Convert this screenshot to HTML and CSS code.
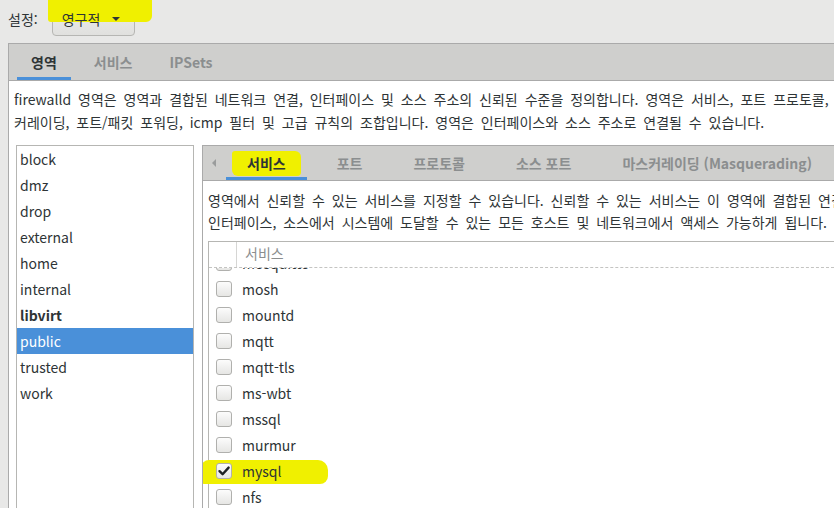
FILE: index.html
```html
<!DOCTYPE html>
<html lang="ko">
<head>
<meta charset="utf-8">
<title>firewalld</title>
<link rel="stylesheet" href="styles.css">
</head>
<body>
<div class="app">
  <div class="topbar">
    <span class="lbl">설정:</span>
    <div class="combo"><span class="combo-text">영구적</span><span class="caret"></span></div>
    <span class="hl hl-top"></span>
  </div>
  <div class="nb">
    <div class="tabs">
      <div class="tab active">영역</div>
      <div class="tab">서비스</div>
      <div class="tab">IPSets</div>
    </div>
    <div class="page">
      <div class="desc">
        <div class="line">firewalld 영역은 영역과 결합된 네트워크 연결, 인터페이스 및 소스 주소의 신뢰된 수준을 정의합니다. 영역은 서비스, 포트 프로토콜, 마스</div>
        <div class="line">커레이딩, 포트/패킷 포워딩, icmp 필터 및 고급 규칙의 조합입니다. 영역은 인터페이스와 소스 주소로 연결될 수 있습니다.</div>
      </div>
      <div class="split">
        <div class="zones">
          <div class="zone">block</div>
          <div class="zone">dmz</div>
          <div class="zone">drop</div>
          <div class="zone">external</div>
          <div class="zone">home</div>
          <div class="zone">internal</div>
          <div class="zone bold">libvirt</div>
          <div class="zone selected">public</div>
          <div class="zone">trusted</div>
          <div class="zone">work</div>
        </div>
        <div class="nb2">
          <div class="tabs2">
            <div class="arrow"><span class="tri-left"></span></div>
            <div class="tab2 active"><span class="hl hl-tab"></span><span class="tab-text">서비스</span></div>
            <div class="tab2">포트</div>
            <div class="tab2">프로토콜</div>
            <div class="tab2">소스 포트</div>
            <div class="tab2">마스커레이딩 (Masquerading)</div>
            <div class="tab2">포트 포워딩</div>
          </div>
          <div class="page2">
            <div class="desc2">
              <div class="line">영역에서 신뢰할 수 있는 서비스를 지정할 수 있습니다. 신뢰할 수 있는 서비스는 이 영역에 결합된 연결,</div>
              <div class="line">인터페이스, 소스에서 시스템에 도달할 수 있는 모든 호스트 및 네트워크에서 액세스 가능하게 됩니다.</div>
            </div>
            <div class="tree">
              <div class="thead">
                <div class="th-check"></div>
                <div class="th-name">서비스</div>
              </div>
              <div class="tbody">
                <div class="row clipped"><span class="cb"></span><span class="name">mosquitto</span></div>
                <div class="row"><span class="cb"></span><span class="name">mosh</span></div>
                <div class="row"><span class="cb"></span><span class="name">mountd</span></div>
                <div class="row"><span class="cb"></span><span class="name">mqtt</span></div>
                <div class="row"><span class="cb"></span><span class="name">mqtt-tls</span></div>
                <div class="row"><span class="cb"></span><span class="name">ms-wbt</span></div>
                <div class="row"><span class="cb"></span><span class="name">mssql</span></div>
                <div class="row"><span class="cb"></span><span class="name">murmur</span></div>
                <div class="row marked"><span class="hl hl-row"></span><span class="cb checked"><svg viewBox="0 0 16 16" width="16" height="16"><path d="M3.5 8.2 L6.6 11.2 L12.6 4.6" fill="none" stroke="#1e2224" stroke-width="2.4" stroke-linecap="round" stroke-linejoin="round"/></svg></span><span class="name">mysql</span></div>
                <div class="row"><span class="cb"></span><span class="name">nfs</span></div>
                <div class="row"><span class="cb"></span><span class="name">nfs3</span></div>
              </div>
            </div>
          </div>
        </div>
      </div>
    </div>
  </div>
</div>
</body>
</html>
```

FILE: styles.css
```css
html, body {
  margin: 0;
  padding: 0;
}
body {
  width: 834px;
  height: 508px;
  overflow: hidden;
  background: #e8e8e7;
  font-family: "Noto Sans CJK KR", "Noto Sans", sans-serif;
  font-size: 14px;
  color: #2e3436;
}
.app {
  height: 508px;
  display: flex;
  flex-direction: column;
}
.topbar {
  position: relative;
  height: 43px;
  box-sizing: border-box;
  padding: 2px 8px 7px 8px;
  display: flex;
  align-items: center;
  gap: 14px;
  flex: none;
}
.lbl {
  line-height: 20px;
  word-spacing: 3px;
}
.combo {
  width: 83px;
  height: 34px;
  box-sizing: border-box;
  border: 1px solid #b6b6b3;
  border-radius: 4px;
  background: linear-gradient(#efefed, #e0e0de);
  display: flex;
  align-items: center;
  padding-left: 9px;
  gap: 12px;
}
.combo-text {
  position: relative;
  z-index: 2;
  line-height: 20px;
}
.caret {
  position: relative;
  z-index: 2;
  width: 0;
  height: 0;
  border-left: 4px solid transparent;
  border-right: 4px solid transparent;
  border-top: 4px solid #2e3436;
}
.hl {
  position: absolute;
  background: #f0f000;
}
.hl-top {
  left: 48px;
  top: 0;
  width: 104px;
  height: 22px;
  border-radius: 0 0 6px 3px;
  z-index: 1;
}
.nb {
  flex: 1;
  margin-left: 8px;
  border-top: 1px solid #aaaaaa;
  border-left: 1px solid #aaaaaa;
  display: flex;
  flex-direction: column;
  min-height: 0;
}
.tabs {
  height: 36px;
  background: #cfcfcd;
  border-bottom: 1px solid #aaaaaa;
  display: flex;
  padding-left: 8px;
  gap: 9px;
  flex: none;
}
.tab {
  padding: 0 14px;
  display: flex;
  align-items: center;
  font-weight: bold;
  color: #8b8e8f;
  box-sizing: border-box;
}
.tab.active {
  color: #2e3436;
  box-shadow: inset 0 -3px 0 #4a90d9;
}
.page {
  flex: 1;
  background: #ffffff;
  display: flex;
  flex-direction: column;
  min-height: 0;
}
.desc {
  padding: 7px 0 0 5px;
  height: 53px;
  box-sizing: border-box;
  line-height: 23px;
  flex: none;
}
.line {
  white-space: nowrap;
  overflow: hidden;
  word-spacing: 3px;
}
.split {
  flex: 1;
  margin-top: 11px;
  padding-left: 7px;
  display: flex;
  gap: 8px;
  min-height: 0;
}
.zones {
  width: 178px;
  box-sizing: border-box;
  border: 1px solid #b6b6b3;
  border-bottom: none;
  background: #ffffff;
  flex: none;
}
.zone {
  height: 26px;
  line-height: 26px;
  padding-left: 3px;
}
.zone.bold {
  font-weight: bold;
}
.zone.selected {
  background: #4a90d9;
  color: #ffffff;
}
.nb2 {
  flex: 1;
  min-width: 0;
  border-top: 1px solid #aaaaaa;
  border-left: 1px solid #aaaaaa;
  display: flex;
  flex-direction: column;
  overflow: hidden;
}
.tabs2 {
  height: 34px;
  background: #cfcfcd;
  border-bottom: 1px solid #aaaaaa;
  display: flex;
  gap: 9px;
  flex: none;
}
.arrow {
  width: 24px;
  display: flex;
  align-items: center;
  padding-left: 9px;
  box-sizing: border-box;
  margin-right: -10px;
  flex: none;
}
.tri-left {
  width: 0;
  height: 0;
  border-top: 4px solid transparent;
  border-bottom: 4px solid transparent;
  border-right: 4px solid #9a9c9c;
}
.tab2 {
  position: relative;
  padding: 0 21px;
  display: flex;
  align-items: center;
  font-weight: bold;
  color: #8b8e8f;
  white-space: nowrap;
  flex: none;
}
.tab2.active {
  color: #2e3436;
  box-shadow: inset 0 -3px 0 #4a90d9;
}
.tab-text {
  position: relative;
  z-index: 1;
}
.hl-tab {
  left: 6px;
  top: 5px;
  width: 69px;
  height: 25px;
  border-radius: 3px 6px 4px 6px;
}
.page2 {
  flex: 1;
  background: #ffffff;
  display: flex;
  flex-direction: column;
  min-height: 0;
}
.desc2 {
  padding: 8px 0 0 5px;
  line-height: 22px;
  flex: none;
}
.tree {
  flex: 1;
  margin: 8px 0 0 5px;
  border-top: 1px solid #b6b6b3;
  border-left: 1px solid #b6b6b3;
  display: flex;
  flex-direction: column;
  min-height: 0;
}
.thead {
  height: 25px;
  display: flex;
  border-bottom: 1px dashed #c4c4c2;
  flex: none;
}
.th-check {
  width: 28px;
  border-right: 1px solid #d6d6d4;
  box-sizing: border-box;
}
.th-name {
  padding-left: 8px;
  line-height: 22px;
  color: #8b8e8f;
}
.tbody {
  flex: 1;
  clip-path: inset(0 0 0 -20px);
}
.row {
  position: relative;
  height: 26px;
  display: flex;
  align-items: center;
  padding-left: 7px;
}
.row.clipped {
  margin-top: -18px;
}
.cb {
  position: relative;
  z-index: 1;
  width: 16px;
  height: 16px;
  box-sizing: border-box;
  border: 1px solid #b0b0ad;
  border-radius: 3px;
  background: linear-gradient(#fcfcfc, #e6e6e4);
  flex: none;
}
.cb svg {
  position: absolute;
  left: -1px;
  top: -1px;
}
.name {
  position: relative;
  z-index: 1;
  margin-left: 10px;
  line-height: 26px;
}
.hl-row {
  left: -8px;
  top: 2px;
  width: 127px;
  height: 24px;
  border-radius: 8px 10px 8px 4px;
  z-index: 0;
}
```
